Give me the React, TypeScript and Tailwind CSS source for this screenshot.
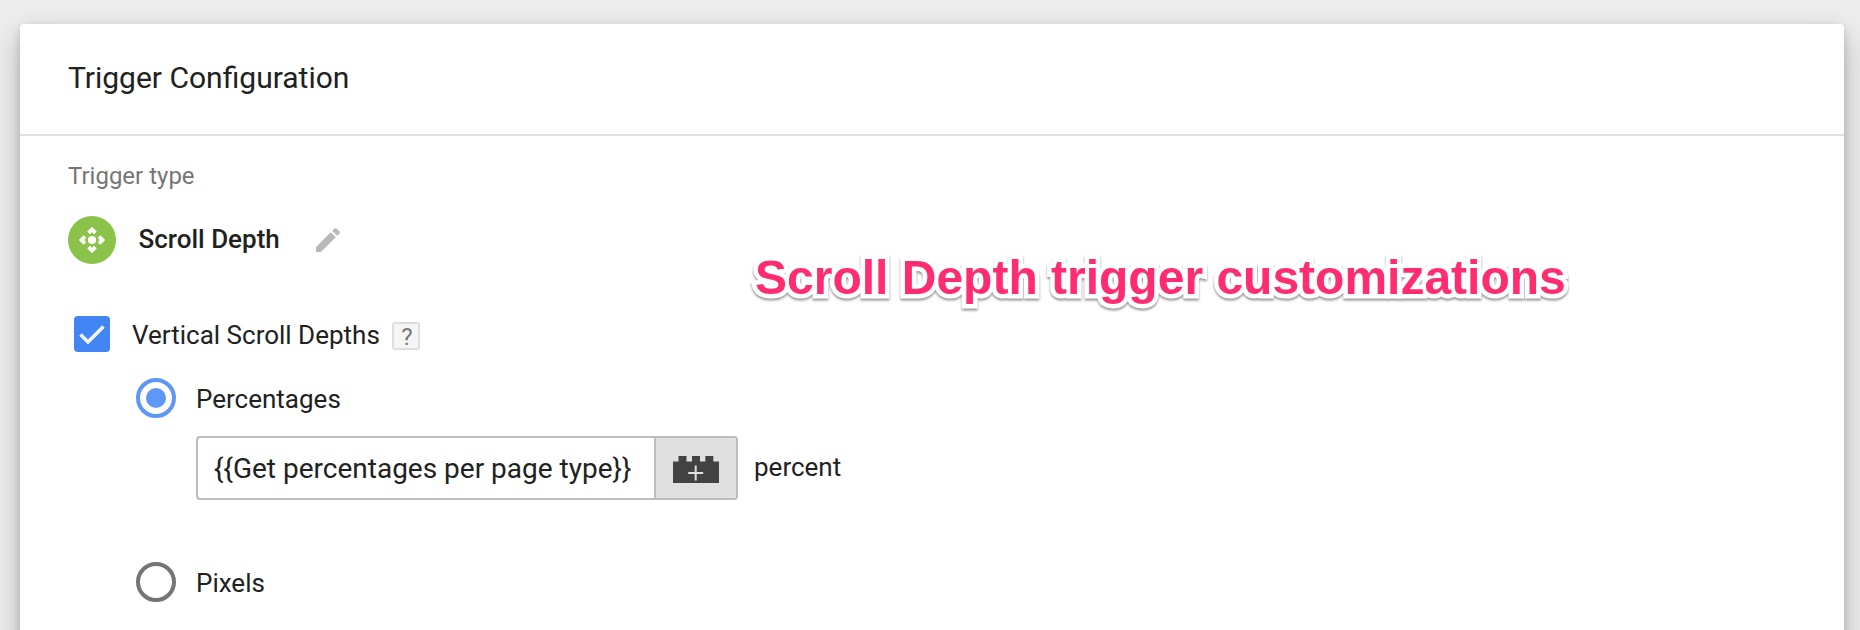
import type { ReactNode } from "react";

function ScrollDepthIcon() {
  return (
    <svg className="h-12 w-12 shrink-0" viewBox="0 0 48 48">
      <circle cx="24" cy="24" r="24" fill="#8bc34a" />
      <circle cx="24" cy="24" r="4.1" fill="#fff" />
      <g fill="none" stroke="#fff" strokeWidth="3.8">
        <path d="M20.6 16.9 24 13.5l3.4 3.4" />
        <path d="M20.6 31.1 24 34.5l3.4-3.4" />
        <path d="M16.9 20.6 13.5 24l3.4 3.4" />
        <path d="M31.1 20.6 34.5 24l-3.4 3.4" />
      </g>
    </svg>
  );
}

function PencilIcon() {
  return (
    <svg className="h-8 w-8" viewBox="0 0 24 24" fill="#b8b8b8">
      <path d="M3 17.25V21h3.75L17.81 9.94l-3.75-3.75L3 17.25zM20.71 7.04a.996.996 0 0 0 0-1.41l-2.34-2.34a.996.996 0 0 0-1.41 0l-1.83 1.83 3.75 3.75 1.83-1.83z" />
    </svg>
  );
}

function BrickIcon() {
  return (
    <svg className="h-[27px] w-[46px]" viewBox="0 0 46 27">
      <path d="M0 5.5h5.5V0h8v5.5H19V0h8v5.5h5.3V0h8v5.5H46V27H0z" fill="#424242" />
      <path d="M22.7 9.5v15M15.2 17h15" stroke="#e0e0e0" strokeWidth="2" />
    </svg>
  );
}

function Radio({ checked = false }: { checked?: boolean }) {
  return checked ? (
    <span className="flex h-10 w-10 shrink-0 items-center justify-center rounded-full border-4 border-[#5e97f6]">
      <span className="h-5 w-5 rounded-full bg-[#5e97f6]" />
    </span>
  ) : (
    <span className="h-10 w-10 shrink-0 rounded-full border-4 border-[#757575]" />
  );
}

function Option({ checked, children }: { checked?: boolean; children: ReactNode }) {
  return (
    <label className="flex h-10 items-center gap-5 pl-[68px]">
      <Radio checked={checked} />
      <span className="pt-0.5">{children}</span>
    </label>
  );
}

export default function App() {
  return (
    <div className="relative h-[630px] overflow-hidden bg-[#ededed] pt-6 pr-4 pl-5 font-[Roboto,sans-serif] text-[26px] leading-8 text-[#212121]">
      <section className="h-[700px] rounded-[4px] bg-white shadow-[0_4px_10px_rgba(0,0,0,0.14),0_12px_30px_rgba(0,0,0,0.24)]">
        <header className="flex h-28 items-center border-b-2 border-[#e0e0e0] pb-0.5 pl-12">
          <h1 className="text-[30px] leading-10">Trigger Configuration</h1>
        </header>
        <div className="pt-6 pl-12">
          <p className="text-[24px] leading-8 text-[#757575]">Trigger type</p>
          <div className="mt-6 flex h-12 items-center">
            <ScrollDepthIcon />
            <span className="ml-[22.5px] -mt-0.5 font-medium">Scroll Depth</span>
            <button className="ml-8">
              <PencilIcon />
            </button>
          </div>
          <div className="mt-[52px] flex h-9 items-center pl-1.5">
            <span className="flex h-9 w-9 items-center justify-center rounded-[4px] bg-[#4285f4]">
              <svg className="h-9 w-9" viewBox="0 0 36 36" fill="none" stroke="#f5f5f5" strokeWidth="3.6">
                <path d="m6.5 18.5 7.5 7.5L29.5 10.5" />
              </svg>
            </span>
            <span className="ml-[22px] pt-0.5">Vertical Scroll Depths</span>
            <span className="mt-1 ml-3 flex h-7 w-7 items-center justify-center rounded-[3px] border-2 border-[#dedede] bg-[#f5f5f5] pt-0.5 pl-0.5 text-[24px] leading-6 text-[#757575]">
              ?
            </span>
          </div>
          <div className="mt-[26px]">
            <Option checked>Percentages</Option>
            <div className="mt-[18px] flex h-16 items-center pl-32">
              <div className="flex h-16 w-[542px] overflow-hidden rounded-[4px] border-2 border-[#bdbdbd]">
                <div className="flex w-[456px] items-center pt-0.5 pl-4 text-[28px]">
                  {"{{Get percentages per page type}}"}
                </div>
                <button className="flex flex-1 items-center justify-center border-l-2 border-[#bdbdbd] bg-[#e0e0e0] pt-0.5">
                  <BrickIcon />
                </button>
              </div>
              <span className="ml-4 -mt-0.5">percent</span>
            </div>
            <div className="mt-[62px]">
              <Option>Pixels</Option>
            </div>
          </div>
        </div>
      </section>
      <div className="absolute top-[249px] left-[755px] font-['Liberation_Sans',Arial,sans-serif] text-[48px] leading-[58px] font-bold whitespace-nowrap text-[#ff2d6f] [-webkit-text-stroke:9px_white] [paint-order:stroke_fill] [stroke-linejoin:round] drop-shadow-[0_2px_1px_rgba(0,0,0,0.4)]">
        Scroll Depth trigger customizations
      </div>
    </div>
  );
}
